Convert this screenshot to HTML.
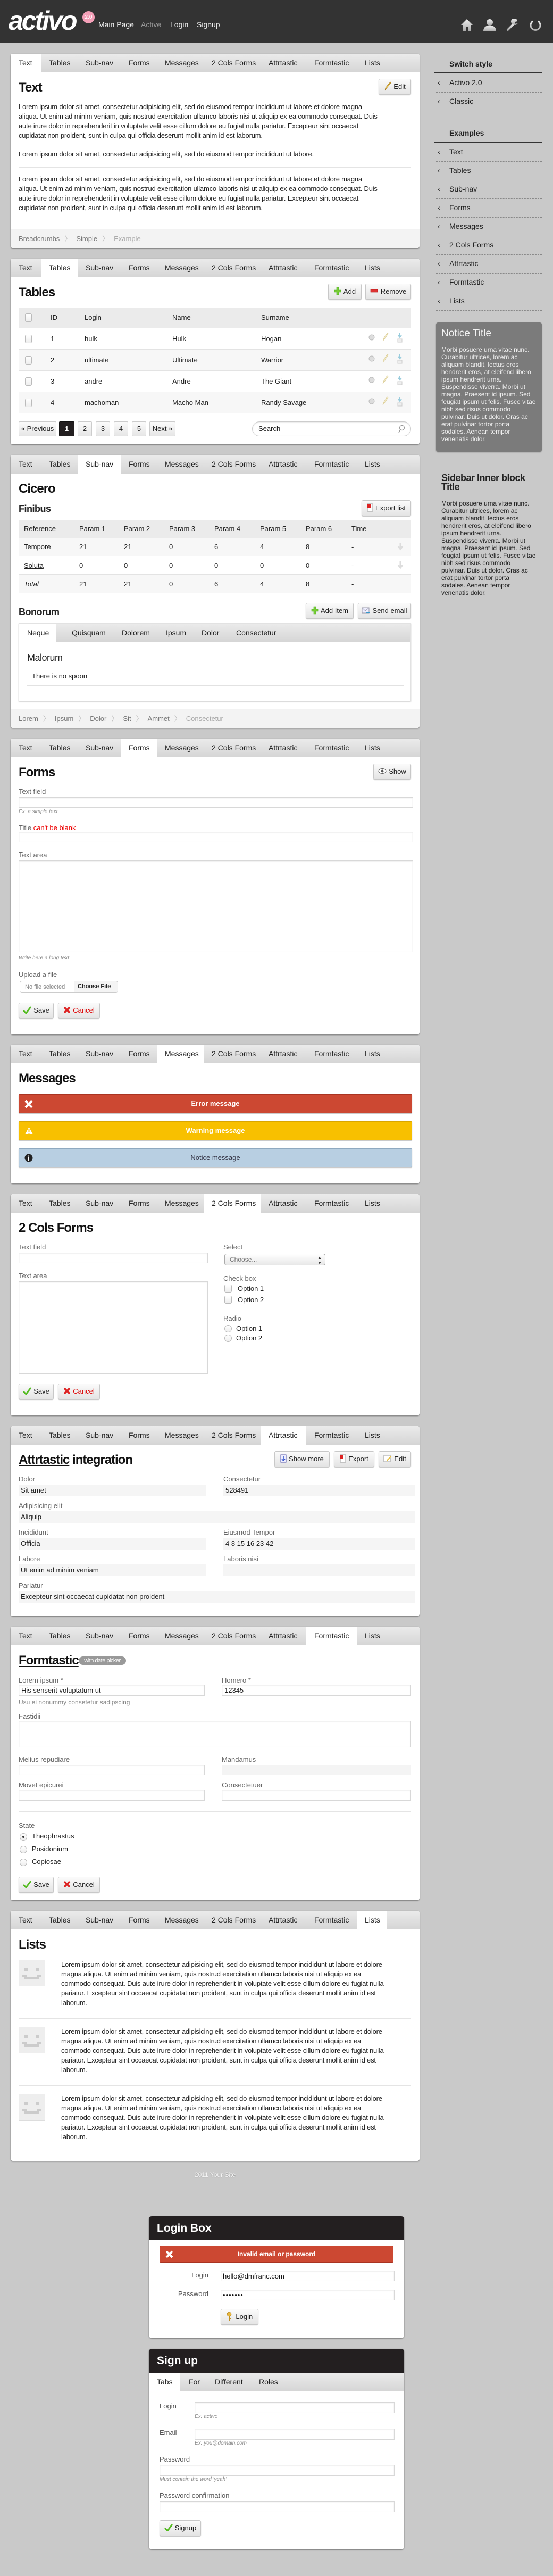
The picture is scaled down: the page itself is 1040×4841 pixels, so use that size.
<!DOCTYPE html>
<html><head><meta charset="utf-8">
<style>
*{box-sizing:border-box;margin:0;padding:0}
body{width:1040px;height:4841px;background:#c9c9c9;font-family:"Liberation Sans",Arial,sans-serif;color:#222;font-size:13px;position:relative;overflow:hidden}
.a{position:absolute}
#hd{position:absolute;left:0;top:0;width:1040px;height:81px;background:#333}
.logo{position:absolute;left:16px;top:10px;font:italic bold 50px "Liberation Sans",sans-serif;color:#fff;letter-spacing:-3px;line-height:58px}
.badge20{position:absolute;left:155px;top:21px;width:23px;height:23px;border-radius:50%;background:#f4a0b8;color:#fff;font-size:10px;line-height:23px;text-align:center}
.nav{position:absolute;top:38px;font-size:14px;color:#eee}
.p{position:absolute;left:20px;width:769px;background:#fff;border-radius:4px;box-shadow:0 1px 2px rgba(0,0,0,.45)}
.tabs{position:relative;height:35px;background:linear-gradient(#ebebeb,#d5d5d5);border-radius:4px 4px 0 0}
.tabs span{position:absolute;top:0;height:35px;line-height:35px;padding-left:15px;font-size:14px;color:#222}
.tabs span.on{background:#fff}
.t1{left:0;width:57px}.t2{left:57px;width:69px}.t3{left:126px;width:81px}.t4{left:207px;width:68px}.t5{left:275px;width:88px}.t6{left:363px;width:107px}.t7{left:470px;width:86px}.t8{left:556px;width:95px}.t9{left:651px;width:57px}
.h2{position:absolute;left:15px;top:50px;font-size:24px;font-weight:bold;letter-spacing:-1px;line-height:28px;color:#111}
.btn{position:absolute;height:30px;line-height:28px;background:linear-gradient(#fbfbfb,#e4e4e4);border:1px solid #c8c8c8;border-radius:3px;box-shadow:0 1px 1px rgba(0,0,0,.25);font-size:13px;color:#222;text-align:center;white-space:nowrap}
.btn svg{vertical-align:middle;margin-right:4px;margin-top:-3px}
.txt{position:absolute;left:15px;line-height:18px;font-size:13px;letter-spacing:-.2px;white-space:nowrap;color:#222}
.hr{position:absolute;left:15px;width:738px;height:0;border-top:2px solid #e4e4e4}
.bc{position:absolute;left:0;width:769px;height:35px;background:#f3f3f3;border-radius:0 0 4px 4px;line-height:35px;padding-left:15px;color:#777;font-size:13px}
.bc i{font-style:normal;color:#bbb;margin:0 9px}
.l{position:absolute;font-size:13px;color:#666;line-height:16px;white-space:nowrap}
.in{position:absolute;background:#fff;border:1px solid #d8d8d8;box-shadow:inset 0 1px 2px rgba(0,0,0,.08)}
.hint{position:absolute;font-size:10px;font-style:italic;color:#888;line-height:12px}
.th{position:absolute;left:15px;width:738px;background:#ebebeb}
.tr{position:absolute;left:15px;width:738px;border-bottom:1px solid #e3e3e3}
.c{position:absolute;line-height:16px;font-size:13px;white-space:nowrap}
.cb{position:absolute;width:13px;height:16px;border:1px solid #bbb;border-radius:3px;background:linear-gradient(#fff,#eee)}
.rd{position:absolute;width:14px;height:14px;border:1px solid #bbb;border-radius:50%;background:linear-gradient(#fff,#eee)}
.msg{position:absolute;left:15px;width:740px;height:36px;border-radius:2px;line-height:34px;text-align:center;font-size:13px;box-shadow:0 1px 1px rgba(0,0,0,.25)}
.sb{position:absolute;left:820px;width:199px}
.sbh{position:absolute;left:845px;font-size:14px;font-weight:bold;color:#222;line-height:16px}
.sbl{position:absolute;left:816px;width:203px;height:0;border-top:2px solid #333}
.sbi{position:absolute;left:823px;font-size:14px;color:#222;line-height:16px;white-space:nowrap}
.sbi b{font-weight:normal;display:inline-block;width:22px}
.sbd{position:absolute;left:820px;width:199px;height:0;border-top:1px dashed #888}
.box{position:absolute;left:280px;width:480px;background:#fff;border-radius:5px;box-shadow:0 1px 2px rgba(0,0,0,.45);overflow:hidden}
.boxh{height:45px;background:#231f20;color:#fff;font-size:21px;font-weight:bold;line-height:45px;padding-left:15px}
.pg{position:absolute;top:306px;height:28px;line-height:26px;text-align:center;background:linear-gradient(#fbfbfb,#e6e6e6);border:1px solid #ccc;border-radius:2px;font-size:13px}
</style></head><body>

<div id="hd">
<div class="logo">activo</div><div class="badge20">2.0</div>
<div class="nav" style="left:185px">Main Page</div>
<div class="nav" style="left:265px;color:#999">Active</div>
<div class="nav" style="left:320px">Login</div>
<div class="nav" style="left:370px">Signup</div>
<svg class="a" style="left:866px;top:35px" width="24" height="24" viewBox="0 0 24 24"><defs><linearGradient id="g" x1="0" y1="0" x2="0" y2="1"><stop offset="0" stop-color="#eee"/><stop offset="1" stop-color="#aaa"/></linearGradient></defs><path d="M12 1 L1 12 H4 V23 H10 V15 H14 V23 H20 V12 H23 Z" fill="url(#g)"/></svg>
<svg class="a" style="left:908px;top:35px" width="26" height="24" viewBox="0 0 26 24"><circle cx="13" cy="7" r="6" fill="url(#g)"/><path d="M1 24 C1 15 7 13 13 13 C19 13 25 15 25 24 Z" fill="url(#g)"/></svg>
<svg class="a" style="left:952px;top:35px" width="24" height="24" viewBox="0 0 24 24"><path d="M3 21 L14 10" stroke="url(#g)" stroke-width="4" stroke-linecap="round"/><path d="M13 11 A6 6 0 1 1 21 5 L17 6 L16 8 L18 10 L22 8 A6 6 0 0 1 13 11Z" fill="url(#g)"/></svg>
<svg class="a" style="left:995px;top:35px" width="24" height="24" viewBox="0 0 24 24"><path d="M7 5 A9 9 0 1 0 17 5" fill="none" stroke="url(#g)" stroke-width="3"/><path d="M12 1 V12" stroke="url(#g)" stroke-width="3"/></svg>
</div>

<!-- SIDEBAR -->
<div class="sbh" style="top:112px">Switch style</div><div class="sbl" style="top:136px"></div>
<div class="sbi" style="top:147px"><b>‹</b>Activo 2.0</div><div class="sbd" style="top:173px"></div>
<div class="sbi" style="top:182px"><b>‹</b>Classic</div><div class="sbd" style="top:208px"></div>
<div class="sbh" style="top:242px">Examples</div><div class="sbl" style="top:266px"></div>
<div class="sbi" style="top:277px"><b>‹</b>Text</div><div class="sbd" style="top:303px"></div>
<div class="sbi" style="top:312px"><b>‹</b>Tables</div><div class="sbd" style="top:338px"></div>
<div class="sbi" style="top:347px"><b>‹</b>Sub-nav</div><div class="sbd" style="top:373px"></div>
<div class="sbi" style="top:382px"><b>‹</b>Forms</div><div class="sbd" style="top:408px"></div>
<div class="sbi" style="top:417px"><b>‹</b>Messages</div><div class="sbd" style="top:443px"></div>
<div class="sbi" style="top:452px"><b>‹</b>2 Cols Forms</div><div class="sbd" style="top:478px"></div>
<div class="sbi" style="top:487px"><b>‹</b>Attrtastic</div><div class="sbd" style="top:513px"></div>
<div class="sbi" style="top:522px"><b>‹</b>Formtastic</div><div class="sbd" style="top:548px"></div>
<div class="sbi" style="top:557px"><b>‹</b>Lists</div><div class="sbd" style="top:583px"></div>

<div class="sb" style="top:606px;height:243px;background:#7b7b7b;border-radius:4px;box-shadow:0 1px 2px rgba(0,0,0,.3)">
<div class="a" style="left:10px;top:10px;font-size:19px;color:#f2f2f2;line-height:22px">Notice Title</div>
<div class="a" style="left:10px;top:44px;font-size:12px;line-height:14px;color:#eee;white-space:nowrap">Morbi posuere urna vitae nunc.<br>Curabitur ultrices, lorem ac<br>aliquam blandit, lectus eros<br>hendrerit eros, at eleifend libero<br>ipsum hendrerit urna.<br>Suspendisse viverra. Morbi ut<br>magna. Praesent id ipsum. Sed<br>feugiat ipsum ut felis. Fusce vitae<br>nibh sed risus commodo<br>pulvinar. Duis ut dolor. Cras ac<br>erat pulvinar tortor porta<br>sodales. Aenean tempor<br>venenatis dolor.</div>
</div>
<div class="a" style="left:830px;top:890px;font-size:18px;font-weight:bold;line-height:17px;letter-spacing:-.5px;color:#222">Sidebar Inner block<br>Title</div>
<div class="a" style="left:830px;top:939px;font-size:12px;line-height:14px;color:#222;white-space:nowrap">Morbi posuere urna vitae nunc.<br>Curabitur ultrices, lorem ac<br><u>aliquam blandit</u>, lectus eros<br>hendrerit eros, at eleifend libero<br>ipsum hendrerit urna.<br>Suspendisse viverra. Morbi ut<br>magna. Praesent id ipsum. Sed<br>feugiat ipsum ut felis. Fusce vitae<br>nibh sed risus commodo<br>pulvinar. Duis ut dolor. Cras ac<br>erat pulvinar tortor porta<br>sodales. Aenean tempor<br>venenatis dolor.</div>

<!-- PANEL 1 TEXT -->
<div class="p" style="top:101px;height:365px">
<div class="tabs"><span class="t1 on">Text</span><span class="t2">Tables</span><span class="t3">Sub-nav</span><span class="t4">Forms</span><span class="t5">Messages</span><span class="t6">2 Cols Forms</span><span class="t7">Attrtastic</span><span class="t8">Formtastic</span><span class="t9">Lists</span></div>
<div class="h2">Text</div>
<div class="btn" style="left:692px;top:47px;width:61px"><svg width="14" height="18"><path d="M2 17 L3 12 L12 1 L13 3 L4 14 Z" fill="#e8c040" stroke="#a07010" stroke-width=".6"/></svg>Edit</div>
<div class="txt" style="top:91px">Lorem ipsum dolor sit amet, consectetur adipisicing elit, sed do eiusmod tempor incididunt ut labore et dolore magna<br>aliqua. Ut enim ad minim veniam, quis nostrud exercitation ullamco laboris nisi ut aliquip ex ea commodo consequat. Duis<br>aute irure dolor in reprehenderit in voluptate velit esse cillum dolore eu fugiat nulla pariatur. Excepteur sint occaecat<br>cupidatat non proident, sunt in culpa qui officia deserunt mollit anim id est laborum.</div>
<div class="txt" style="top:180px">Lorem ipsum dolor sit amet, consectetur adipisicing elit, sed do eiusmod tempor incididunt ut labore.</div>
<div class="hr" style="top:212px"></div>
<div class="txt" style="top:227px">Lorem ipsum dolor sit amet, consectetur adipisicing elit, sed do eiusmod tempor incididunt ut labore et dolore magna<br>aliqua. Ut enim ad minim veniam, quis nostrud exercitation ullamco laboris nisi ut aliquip ex ea commodo consequat. Duis<br>aute irure dolor in reprehenderit in voluptate velit esse cillum dolore eu fugiat nulla pariatur. Excepteur sint occaecat<br>cupidatat non proident, sunt in culpa qui officia deserunt mollit anim id est laborum.</div>
<div class="bc" style="top:330px">Breadcrumbs<i>〉</i>Simple<i>〉</i><span style="color:#aaa">Example</span></div>
</div>

<!-- PANEL 2 TABLES -->
<div class="p" style="top:486px;height:349px">
<div class="tabs"><span class="t1">Text</span><span class="t2 on">Tables</span><span class="t3">Sub-nav</span><span class="t4">Forms</span><span class="t5">Messages</span><span class="t6">2 Cols Forms</span><span class="t7">Attrtastic</span><span class="t8">Formtastic</span><span class="t9">Lists</span></div>
<div class="h2">Tables</div>
<div class="btn" style="left:597px;top:47px;width:63px"><svg width="14" height="16"><path d="M5 1H9V6H13V10H9V15H5V10H1V6H5Z" fill="#7c3" stroke="#4a2" stroke-width=".6"/></svg>Add</div>
<div class="btn" style="left:667px;top:47px;width:86px"><svg width="16" height="8"><rect x="1" y="1" width="13" height="5" fill="#d33" stroke="#a11" stroke-width=".6"/></svg>Remove</div>
<div class="th" style="top:92px;height:39px"></div>
<div class="cb" style="left:27px;top:103px"></div><div class="c" style="left:75px;top:103px">ID</div><div class="c" style="left:139px;top:103px">Login</div><div class="c" style="left:304px;top:103px">Name</div><div class="c" style="left:471px;top:103px">Surname</div>
<div class="tr" style="top:131px;height:40px;background:#fff"></div>
<div class="tr" style="top:171px;height:40px;background:#f7f7f7"></div>
<div class="tr" style="top:211px;height:40px;background:#fff"></div>
<div class="tr" style="top:251px;height:40px;background:#f7f7f7"></div>
<div class="cb" style="left:27px;top:143px"></div><div class="c" style="left:75px;top:143px">1</div><div class="c" style="left:139px;top:143px">hulk</div><div class="c" style="left:304px;top:143px">Hulk</div><div class="c" style="left:471px;top:143px">Hogan</div>
<div class="cb" style="left:27px;top:183px"></div><div class="c" style="left:75px;top:183px">2</div><div class="c" style="left:139px;top:183px">ultimate</div><div class="c" style="left:304px;top:183px">Ultimate</div><div class="c" style="left:471px;top:183px">Warrior</div>
<div class="cb" style="left:27px;top:223px"></div><div class="c" style="left:75px;top:223px">3</div><div class="c" style="left:139px;top:223px">andre</div><div class="c" style="left:304px;top:223px">Andre</div><div class="c" style="left:471px;top:223px">The Giant</div>
<div class="cb" style="left:27px;top:263px"></div><div class="c" style="left:75px;top:263px">4</div><div class="c" style="left:139px;top:263px">machoman</div><div class="c" style="left:304px;top:263px">Macho Man</div><div class="c" style="left:471px;top:263px">Randy Savage</div>
<svg class="a" style="left:672px;top:139px" width="80" height="150">
<g id="ic"><circle cx="7" cy="9" r="5" fill="#ddd" stroke="#bbb"/><path d="M28 16 L30 10 L36 1 L38 2 L32 11 Z" fill="#f3ecc8" stroke="#d8c890" stroke-width=".7"/><path d="M60 1V7 M57 5 L60 9 L63 5" stroke="#9cd" stroke-width="2" fill="none"/><rect x="56" y="12" width="8" height="6" fill="#eee" stroke="#ccc"/></g>
<use href="#ic" y="40"/><use href="#ic" y="80"/><use href="#ic" y="120"/></svg>
<div class="pg" style="left:15px;width:71px">« Previous</div>
<div class="pg" style="left:91px;width:29px;background:#231f20;color:#fff;border-color:#111;font-weight:bold">1</div>
<div class="pg" style="left:126px;width:27px">2</div>
<div class="pg" style="left:160px;width:27px">3</div>
<div class="pg" style="left:194px;width:27px">4</div>
<div class="pg" style="left:228px;width:27px">5</div>
<div class="pg" style="left:261px;width:49px">Next »</div>
<div class="a" style="left:454px;top:306px;width:299px;height:28px;border:1px solid #ccc;border-radius:14px;line-height:26px;padding-left:11px;font-size:13px;box-shadow:inset 0 1px 2px rgba(0,0,0,.1)">Search<svg class="a" style="right:10px;top:5px" width="14" height="16"><circle cx="8" cy="6" r="4.5" fill="none" stroke="#999" stroke-width="1.3"/><path d="M5 9 L2 15" stroke="#999" stroke-width="1.5"/></svg></div>
</div>

<!-- PANEL 3 SUBNAV -->
<div class="p" style="top:855px;height:513px">
<div class="tabs"><span class="t1">Text</span><span class="t2">Tables</span><span class="t3 on">Sub-nav</span><span class="t4">Forms</span><span class="t5">Messages</span><span class="t6">2 Cols Forms</span><span class="t7">Attrtastic</span><span class="t8">Formtastic</span><span class="t9">Lists</span></div>
<div class="h2">Cicero</div>
<div class="a" style="left:15px;top:91px;font-size:18px;font-weight:bold;letter-spacing:-.5px">Finibus</div>
<div class="btn" style="left:660px;top:85px;width:93px"><svg width="12" height="16"><rect x="1" y="1" width="10" height="14" fill="#fff" stroke="#999"/><rect x="1" y="2" width="6" height="7" fill="#d22"/></svg>Export list</div>
<div class="th" style="top:122px;height:34px"></div>
<div class="tr" style="top:156px;height:34px;background:#f7f7f7"></div>
<div class="tr" style="top:190px;height:35px;background:#fff"></div>
<div class="tr" style="top:225px;height:35px;background:#f7f7f7"></div>
<div class="c" style="left:25px;top:131px">Reference</div><div class="c" style="left:129px;top:131px">Param 1</div><div class="c" style="left:213px;top:131px">Param 2</div><div class="c" style="left:298px;top:131px">Param 3</div><div class="c" style="left:383px;top:131px">Param 4</div><div class="c" style="left:469px;top:131px">Param 5</div><div class="c" style="left:555px;top:131px">Param 6</div><div class="c" style="left:641px;top:131px">Time</div>
<div class="c" style="left:25px;top:165px;text-decoration:underline">Tempore</div><div class="c" style="left:129px;top:165px">21</div><div class="c" style="left:213px;top:165px">21</div><div class="c" style="left:298px;top:165px">0</div><div class="c" style="left:383px;top:165px">6</div><div class="c" style="left:469px;top:165px">4</div><div class="c" style="left:555px;top:165px">8</div><div class="c" style="left:641px;top:165px">-</div>
<div class="c" style="left:25px;top:200px;text-decoration:underline">Soluta</div><div class="c" style="left:129px;top:200px">0</div><div class="c" style="left:213px;top:200px">0</div><div class="c" style="left:298px;top:200px">0</div><div class="c" style="left:383px;top:200px">0</div><div class="c" style="left:469px;top:200px">0</div><div class="c" style="left:555px;top:200px">0</div><div class="c" style="left:641px;top:200px">-</div>
<div class="c" style="left:25px;top:235px;font-style:italic">Total</div><div class="c" style="left:129px;top:235px">21</div><div class="c" style="left:213px;top:235px">21</div><div class="c" style="left:298px;top:235px">0</div><div class="c" style="left:383px;top:235px">6</div><div class="c" style="left:469px;top:235px">4</div><div class="c" style="left:555px;top:235px">8</div><div class="c" style="left:641px;top:235px">-</div>
<svg class="a" style="left:726px;top:164px" width="14" height="52"><path d="M7 1V12 M3 8 L7 13 L11 8" stroke="#ddd" stroke-width="3" fill="none"/><path d="M7 36V47 M3 43 L7 48 L11 43" stroke="#ddd" stroke-width="3" fill="none"/></svg>
<div class="a" style="left:15px;top:285px;font-size:18px;font-weight:bold;letter-spacing:-.5px">Bonorum</div>
<div class="btn" style="left:555px;top:278px;width:90px"><svg width="14" height="16"><path d="M5 1H9V6H13V10H9V15H5V10H1V6H5Z" fill="#7c3" stroke="#4a2" stroke-width=".6"/></svg>Add Item</div>
<div class="btn" style="left:653px;top:278px;width:100px"><svg width="16" height="16"><rect x="1" y="3" width="13" height="10" fill="#eef" stroke="#99a"/><path d="M1 3 L7 9 L14 3" stroke="#99a" fill="none"/><path d="M9 12 H15" stroke="#39c" stroke-width="2"/></svg>Send email</div>
<div class="a" style="left:15px;top:316px;width:738px;height:147px;border:1px solid #e2e2e2;box-shadow:0 1px 2px rgba(0,0,0,.2)">
<div class="tabs" style="border-radius:0"><span style="left:0;width:70px" class="on">Neque</span><span style="left:84px">Quisquam</span><span style="left:178px">Dolorem</span><span style="left:261px">Ipsum</span><span style="left:328px">Dolor</span><span style="left:393px">Consectetur</span></div>
<div class="a" style="left:15px;top:54px;font-size:18px;letter-spacing:-.5px">Malorum</div>
<div class="a" style="left:24px;top:91px;font-size:13px">There is no spoon</div>
<div class="a" style="left:14px;top:116px;width:710px;border-top:1px solid #e2e2e2"></div>
</div>
<div class="bc" style="top:478px">Lorem<i>〉</i>Ipsum<i>〉</i>Dolor<i>〉</i>Sit<i>〉</i>Ammet<i>〉</i><span style="color:#aaa">Consectetur</span></div>
</div>

<!-- PANEL 4 FORMS -->
<div class="p" style="top:1388px;height:556px">
<div class="tabs"><span class="t1">Text</span><span class="t2">Tables</span><span class="t3">Sub-nav</span><span class="t4 on">Forms</span><span class="t5">Messages</span><span class="t6">2 Cols Forms</span><span class="t7">Attrtastic</span><span class="t8">Formtastic</span><span class="t9">Lists</span></div>
<div class="h2">Forms</div>
<div class="btn" style="left:682px;top:47px;width:71px"><svg width="16" height="12"><ellipse cx="8" cy="6" rx="7" ry="4.5" fill="#fff" stroke="#555"/><circle cx="8" cy="6" r="2.5" fill="#555"/></svg>Show</div>
<div class="l" style="left:15px;top:92px">Text field</div>
<div class="in" style="left:15px;top:110px;width:742px;height:20px"></div>
<div class="hint" style="left:15px;top:132px">Ex: a simple text</div>
<div class="l" style="left:15px;top:160px">Title <span style="color:#e00">can't be blank</span></div>
<div class="in" style="left:15px;top:175px;width:742px;height:20px"></div>
<div class="l" style="left:15px;top:211px">Text area</div>
<div class="in" style="left:15px;top:229px;width:742px;height:173px"></div>
<div class="hint" style="left:15px;top:407px">Write here a long text</div>
<div class="l" style="left:15px;top:436px">Upload a file</div>
<div class="a" style="left:17px;top:455px;width:185px;height:23px;border:1px solid #ccc;border-radius:4px;font-size:11px;overflow:hidden"><span class="a" style="left:9px;top:5px;color:#888">No file selected</span><span class="a" style="left:101px;top:0;height:23px;width:84px;border-left:1px solid #ccc;background:#f4f4f4;line-height:21px;padding-left:6px;font-weight:bold">Choose File</span></div>
<div class="btn" style="left:15px;top:496px;width:66px"><svg width="16" height="14"><path d="M1 8 L6 13 L15 1" stroke="#5b2" stroke-width="3" fill="none"/></svg>Save</div>
<div class="btn" style="left:89px;top:496px;width:79px;color:#d00"><svg width="14" height="14"><path d="M2 2 L12 12 M12 2 L2 12" stroke="#d22" stroke-width="3.5"/></svg>Cancel</div>
</div>

<!-- PANEL 5 MESSAGES -->
<div class="p" style="top:1963px;height:261px">
<div class="tabs"><span class="t1">Text</span><span class="t2">Tables</span><span class="t3">Sub-nav</span><span class="t4">Forms</span><span class="t5 on">Messages</span><span class="t6">2 Cols Forms</span><span class="t7">Attrtastic</span><span class="t8">Formtastic</span><span class="t9">Lists</span></div>
<div class="h2">Messages</div>
<div class="msg" style="top:93px;background:#cc4832;border:1px solid #a93422;color:#fff;font-weight:bold"><svg class="a" style="left:10px;top:10px" width="16" height="16"><path d="M2 2 L14 14 M14 2 L2 14" stroke="#fff" stroke-width="4"/></svg>Error message</div>
<div class="msg" style="top:144px;background:#f8c000;border:1px solid #d9a600;color:#fff;font-weight:bold"><svg class="a" style="left:10px;top:9px" width="17" height="16"><path d="M8.5 1 L16 15 H1 Z" fill="#fff"/><path d="M8.5 5V11M8.5 12.5V14" stroke="#f8c000" stroke-width="2"/></svg>Warning message</div>
<div class="msg" style="top:195px;background:#b8cfe2;border:1px solid #8fa9c0;color:#334"><svg class="a" style="left:10px;top:9px" width="16" height="16"><circle cx="8" cy="8" r="7.5" fill="#222"/><path d="M8 7V13M8 3.5V5.5" stroke="#fff" stroke-width="2"/></svg>Notice message</div>
</div>

<!-- PANEL 6 2 COLS -->
<div class="p" style="top:2244px;height:416px">
<div class="tabs"><span class="t1">Text</span><span class="t2">Tables</span><span class="t3">Sub-nav</span><span class="t4">Forms</span><span class="t5">Messages</span><span class="t6 on">2 Cols Forms</span><span class="t7">Attrtastic</span><span class="t8">Formtastic</span><span class="t9">Lists</span></div>
<div class="h2">2 Cols Forms</div>
<div class="l" style="left:15px;top:92px">Text field</div>
<div class="in" style="left:15px;top:110px;width:356px;height:20px"></div>
<div class="l" style="left:15px;top:146px">Text area</div>
<div class="in" style="left:15px;top:164px;width:356px;height:174px"></div>
<div class="l" style="left:400px;top:92px">Select</div>
<div class="a" style="left:402px;top:112px;width:190px;height:22px;border:1px solid #aaa;border-radius:4px;background:linear-gradient(#fff,#e8e8e8);font-size:12px;color:#777;line-height:20px;padding-left:9px">Choose...<span class="a" style="right:6px;top:2px;font-size:8px;color:#333;line-height:10px">▲<br>▼</span></div>
<div class="l" style="left:400px;top:151px">Check box</div>
<div class="cb" style="left:402px;top:170px;width:14px;height:15px"></div><div class="c" style="left:427px;top:170px">Option 1</div>
<div class="cb" style="left:402px;top:191px;width:14px;height:15px"></div><div class="c" style="left:427px;top:191px">Option 2</div>
<div class="l" style="left:400px;top:226px">Radio</div>
<div class="rd" style="left:402px;top:246px"></div><div class="c" style="left:424px;top:245px">Option 1</div>
<div class="rd" style="left:402px;top:264px"></div><div class="c" style="left:424px;top:263px">Option 2</div>
<div class="btn" style="left:15px;top:356px;width:66px"><svg width="16" height="14"><path d="M1 8 L6 13 L15 1" stroke="#5b2" stroke-width="3" fill="none"/></svg>Save</div>
<div class="btn" style="left:89px;top:356px;width:79px;color:#d00"><svg width="14" height="14"><path d="M2 2 L12 12 M12 2 L2 12" stroke="#d22" stroke-width="3.5"/></svg>Cancel</div>
</div>

<!-- PANEL 7 ATTRTASTIC -->
<div class="p" style="top:2680px;height:357px">
<div class="tabs"><span class="t1">Text</span><span class="t2">Tables</span><span class="t3">Sub-nav</span><span class="t4">Forms</span><span class="t5">Messages</span><span class="t6">2 Cols Forms</span><span class="t7 on">Attrtastic</span><span class="t8">Formtastic</span><span class="t9">Lists</span></div>
<div class="h2"><u>Attrtastic</u> integration</div>
<div class="btn" style="left:496px;top:47px;width:104px"><svg width="12" height="16"><rect x="1" y="1" width="10" height="14" fill="#eef" stroke="#55a"/><path d="M6 4V12M3 9L6 12L9 9" stroke="#35c" stroke-width="1.6" fill="none"/></svg>Show more</div>
<div class="btn" style="left:608px;top:47px;width:76px"><svg width="12" height="16"><rect x="1" y="1" width="10" height="14" fill="#fff" stroke="#999"/><rect x="1" y="2" width="6" height="7" fill="#d22"/></svg>Export</div>
<div class="btn" style="left:692px;top:47px;width:61px"><svg width="16" height="16"><rect x="1" y="2" width="12" height="12" fill="#fff" stroke="#999"/><path d="M6 14 L7 10 L14 3 L15 5 L8 12Z" fill="#e8c040"/></svg>Edit</div>
<div class="l" style="left:15px;top:92px">Dolor</div><div class="l" style="left:400px;top:92px">Consectetur</div>
<div class="a" style="left:15px;top:110px;width:353px;height:22px;background:#f5f5f5;padding:3px 4px;font-size:13px">Sit amet</div>
<div class="a" style="left:400px;top:110px;width:361px;height:22px;background:#f5f5f5;padding:3px 4px;font-size:13px">528491</div>
<div class="l" style="left:15px;top:142px">Adipisicing elit</div>
<div class="a" style="left:15px;top:160px;width:746px;height:22px;background:#f5f5f5;padding:3px 4px;font-size:13px">Aliquip</div>
<div class="l" style="left:15px;top:192px">Incididunt</div><div class="l" style="left:400px;top:192px">Eiusmod Tempor</div>
<div class="a" style="left:15px;top:210px;width:353px;height:22px;background:#f5f5f5;padding:3px 4px;font-size:13px">Officia</div>
<div class="a" style="left:400px;top:210px;width:361px;height:22px;background:#f5f5f5;padding:3px 4px;font-size:13px">4 8 15 16 23 42</div>
<div class="l" style="left:15px;top:242px">Labore</div><div class="l" style="left:400px;top:242px">Laboris nisi</div>
<div class="a" style="left:15px;top:260px;width:353px;height:22px;background:#f5f5f5;padding:3px 4px;font-size:13px">Ut enim ad minim veniam</div>
<div class="a" style="left:400px;top:260px;width:361px;height:22px;background:#f5f5f5"></div>
<div class="l" style="left:15px;top:292px">Pariatur</div>
<div class="a" style="left:15px;top:310px;width:746px;height:22px;background:#f5f5f5;padding:3px 4px;font-size:13px">Excepteur sint occaecat cupidatat non proident</div>
</div>

<!-- PANEL 8 FORMTASTIC -->
<div class="p" style="top:3057px;height:514px">
<div class="tabs"><span class="t1">Text</span><span class="t2">Tables</span><span class="t3">Sub-nav</span><span class="t4">Forms</span><span class="t5">Messages</span><span class="t6">2 Cols Forms</span><span class="t7">Attrtastic</span><span class="t8 on">Formtastic</span><span class="t9">Lists</span></div>
<div class="h2"><u>Formtastic</u></div>
<div class="a" style="left:128px;top:56px;width:89px;height:16px;border-radius:8px;background:#999;color:#fff;font-size:11px;line-height:16px;text-align:center;letter-spacing:-.5px">with date picker</div>
<div class="l" style="left:15px;top:93px">Lorem ipsum *</div><div class="l" style="left:397px;top:93px">Homero *</div>
<div class="in" style="left:15px;top:109px;width:350px;height:21px;padding:2px 4px;font-size:13px">His senserit voluptatum ut</div>
<div class="in" style="left:397px;top:109px;width:356px;height:21px;padding:2px 4px;font-size:13px">12345</div>
<div class="l" style="left:15px;top:134px;color:#888;font-size:12px">Usu ei nonummy consetetur sadipscing</div>
<div class="l" style="left:15px;top:161px">Fastidii</div>
<div class="in" style="left:15px;top:177px;width:738px;height:50px"></div>
<div class="l" style="left:15px;top:242px">Melius repudiare</div><div class="l" style="left:397px;top:242px">Mandamus</div>
<div class="in" style="left:15px;top:259px;width:350px;height:20px"></div>
<div class="a" style="left:397px;top:259px;width:356px;height:20px;background:#f4f4f4"></div>
<div class="l" style="left:15px;top:290px">Movet epicurei</div><div class="l" style="left:397px;top:290px">Consectetuer</div>
<div class="in" style="left:15px;top:306px;width:350px;height:21px"></div>
<div class="in" style="left:397px;top:306px;width:356px;height:21px"></div>
<div class="hr" style="top:347px;border-top-width:1px"></div>
<div class="l" style="left:15px;top:366px">State</div>
<div class="rd" style="left:17px;top:388px"><div style="width:4px;height:4px;border-radius:50%;background:#333;margin:4px"></div></div><div class="c" style="left:40px;top:386px">Theophrastus</div>
<div class="rd" style="left:17px;top:412px"></div><div class="c" style="left:40px;top:410px">Posidonium</div>
<div class="rd" style="left:17px;top:436px"></div><div class="c" style="left:40px;top:434px">Copiosae</div>
<div class="btn" style="left:15px;top:470px;width:66px"><svg width="16" height="14"><path d="M1 8 L6 13 L15 1" stroke="#5b2" stroke-width="3" fill="none"/></svg>Save</div>
<div class="btn" style="left:89px;top:470px;width:79px"><svg width="14" height="14"><path d="M2 2 L12 12 M12 2 L2 12" stroke="#d22" stroke-width="3.5"/></svg>Cancel</div>
</div>

<!-- PANEL 9 LISTS -->
<div class="p" style="top:3591px;height:470px">
<div class="tabs"><span class="t1">Text</span><span class="t2">Tables</span><span class="t3">Sub-nav</span><span class="t4">Forms</span><span class="t5">Messages</span><span class="t6">2 Cols Forms</span><span class="t7">Attrtastic</span><span class="t8">Formtastic</span><span class="t9 on">Lists</span></div>
<div class="h2">Lists</div>
<svg class="a" style="left:15px;top:92px" width="50" height="50"><rect x=".5" y=".5" width="49" height="49" fill="#eee" stroke="#ddd"/><rect x="11" y="15" width="6" height="6" fill="#ccc"/><rect x="33" y="15" width="6" height="6" fill="#ccc"/><path d="M7 31H13V35H37V31H43" stroke="#ccc" stroke-width="4" fill="none"/></svg>
<div class="txt" style="left:95px;top:92px">Lorem ipsum dolor sit amet, consectetur adipisicing elit, sed do eiusmod tempor incididunt ut labore et dolore<br>magna aliqua. Ut enim ad minim veniam, quis nostrud exercitation ullamco laboris nisi ut aliquip ex ea<br>commodo consequat. Duis aute irure dolor in reprehenderit in voluptate velit esse cillum dolore eu fugiat nulla<br>pariatur. Excepteur sint occaecat cupidatat non proident, sunt in culpa qui officia deserunt mollit anim id est<br>laborum.</div>
<div class="hr" style="top:202px;border-top-width:1px"></div>
<svg class="a" style="left:15px;top:218px" width="50" height="50"><rect x=".5" y=".5" width="49" height="49" fill="#eee" stroke="#ddd"/><rect x="11" y="15" width="6" height="6" fill="#ccc"/><rect x="33" y="15" width="6" height="6" fill="#ccc"/><path d="M7 31H13V35H37V31H43" stroke="#ccc" stroke-width="4" fill="none"/></svg>
<div class="txt" style="left:95px;top:218px">Lorem ipsum dolor sit amet, consectetur adipisicing elit, sed do eiusmod tempor incididunt ut labore et dolore<br>magna aliqua. Ut enim ad minim veniam, quis nostrud exercitation ullamco laboris nisi ut aliquip ex ea<br>commodo consequat. Duis aute irure dolor in reprehenderit in voluptate velit esse cillum dolore eu fugiat nulla<br>pariatur. Excepteur sint occaecat cupidatat non proident, sunt in culpa qui officia deserunt mollit anim id est<br>laborum.</div>
<div class="hr" style="top:328px;border-top-width:1px"></div>
<svg class="a" style="left:15px;top:344px" width="50" height="50"><rect x=".5" y=".5" width="49" height="49" fill="#eee" stroke="#ddd"/><rect x="11" y="15" width="6" height="6" fill="#ccc"/><rect x="33" y="15" width="6" height="6" fill="#ccc"/><path d="M7 31H13V35H37V31H43" stroke="#ccc" stroke-width="4" fill="none"/></svg>
<div class="txt" style="left:95px;top:344px">Lorem ipsum dolor sit amet, consectetur adipisicing elit, sed do eiusmod tempor incididunt ut labore et dolore<br>magna aliqua. Ut enim ad minim veniam, quis nostrud exercitation ullamco laboris nisi ut aliquip ex ea<br>commodo consequat. Duis aute irure dolor in reprehenderit in voluptate velit esse cillum dolore eu fugiat nulla<br>pariatur. Excepteur sint occaecat cupidatat non proident, sunt in culpa qui officia deserunt mollit anim id est<br>laborum.</div>
<div class="hr" style="top:455px;border-top-width:1px"></div>
</div>

<div class="a" style="left:0;width:809px;top:4080px;text-align:center;font-size:12px;color:#f4f4f4;text-shadow:0 1px 1px #999">2011 Your Site</div>

<!-- LOGIN BOX -->
<div class="box" style="top:4165px;height:229px">
<div class="boxh">Login Box</div>
<div class="a" style="left:20px;top:55px;width:440px;height:32px;background:#cc4832;border:1px solid #a93422;border-radius:2px;color:#fff;font-weight:bold;font-size:12px;text-align:center;line-height:30px"><svg class="a" style="left:10px;top:8px" width="15" height="15"><path d="M2 2 L13 13 M13 2 L2 13" stroke="#fff" stroke-width="4"/></svg>Invalid email or password</div>
<div class="l" style="left:20px;top:103px;width:92px;text-align:right;color:#555">Login</div>
<div class="in" style="left:135px;top:102px;width:327px;height:20px;padding:2px 3px;font-size:13px;color:#111">hello@dmfranc.com</div>
<div class="l" style="left:20px;top:138px;width:92px;text-align:right;color:#555">Password</div>
<div class="in" style="left:135px;top:138px;width:327px;height:20px;padding:1px 3px;font-size:13px;color:#111;letter-spacing:1px">•••••••</div>
<div class="btn" style="left:135px;top:174px;width:71px"><svg width="10" height="18"><circle cx="5" cy="5" r="4" fill="#e8b840" stroke="#a07010" stroke-width=".6"/><path d="M5 9V17M5 13H8M5 16H7" stroke="#c09020" stroke-width="2"/></svg> Login</div>
</div>

<!-- SIGNUP -->
<div class="box" style="top:4414px;height:377px">
<div class="boxh">Sign up</div>
<div class="tabs" style="border-radius:0"><span style="left:0;width:59px;padding-left:15px" class="on">Tabs</span><span style="left:60px">For</span><span style="left:109px">Different</span><span style="left:192px">Roles</span></div>
<div class="l" style="left:20px;top:100px;color:#555">Login</div>
<div class="in" style="left:86px;top:100px;width:376px;height:21px"></div>
<div class="hint" style="left:86px;top:122px">Ex: activo</div>
<div class="l" style="left:20px;top:150px;color:#555">Email</div>
<div class="in" style="left:86px;top:150px;width:376px;height:21px"></div>
<div class="hint" style="left:86px;top:172px">Ex: you@domain.com</div>
<div class="l" style="left:20px;top:200px;color:#555">Password</div>
<div class="in" style="left:20px;top:218px;width:442px;height:21px"></div>
<div class="hint" style="left:20px;top:240px">Must contain the word 'yeah'</div>
<div class="l" style="left:20px;top:268px;color:#555">Password confirmation</div>
<div class="in" style="left:20px;top:286px;width:442px;height:21px"></div>
<div class="btn" style="left:20px;top:322px;width:78px"><svg width="16" height="14"><path d="M1 8 L6 13 L15 1" stroke="#5b2" stroke-width="3" fill="none"/></svg>Signup</div>
</div>

</body></html>
